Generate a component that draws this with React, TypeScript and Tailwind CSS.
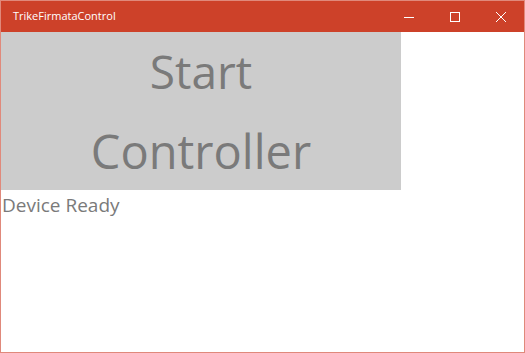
import React from "react";

export default function App() {
  return (
    <div className="w-[525px] h-[353px] bg-white border border-[#e0897b] flex flex-col overflow-hidden" style={{ fontFamily: '"Segoe UI", "Open Sans", sans-serif' }}>
      <div className="h-[31px] bg-[#cd4129] flex items-center text-white shrink-0">
        <div className="pl-[12px] text-[11px] flex-1">TrikeFirmataControl</div>
        <div className="w-[46px] h-full flex items-center justify-center">
          <svg width="10" height="10" viewBox="0 0 10 10"><path d="M0 5.5H10" stroke="white" strokeWidth="1" /></svg>
        </div>
        <div className="w-[46px] h-full flex items-center justify-center">
          <svg width="10" height="10" viewBox="0 0 10 10"><rect x="0.5" y="0.5" width="9" height="9" fill="none" stroke="white" strokeWidth="1" /></svg>
        </div>
        <div className="w-[46px] h-full flex items-center justify-center">
          <svg width="10" height="10" viewBox="0 0 10 10"><path d="M0 0L10 10M10 0L0 10" stroke="white" strokeWidth="1" /></svg>
        </div>
      </div>
      <div className="w-[400px] h-[158px] bg-[#cccccc] text-[#7a7a7a] flex flex-col items-center justify-center text-[46px] leading-[80px]">
        <div>Start</div>
        <div className="text-[47px]">Controller</div>
      </div>
      <div className="text-[#7a7a7a] text-[19px] leading-[30px] pl-[1px]">Device Ready</div>
    </div>
  );
}
